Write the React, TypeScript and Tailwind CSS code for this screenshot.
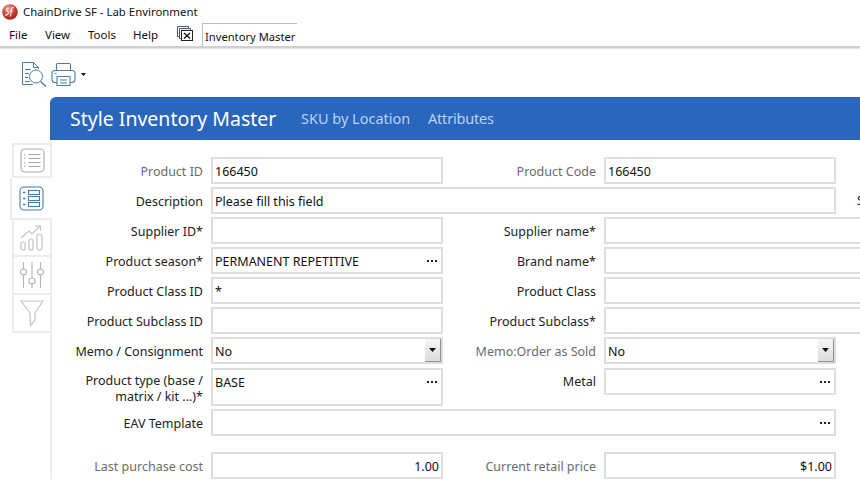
import React from 'react'

type FieldProps = {
  label: React.ReactNode
  value?: string
  kind?: 'text' | 'lookup' | 'select'
  align?: 'left' | 'right'
  muted?: boolean
  inputClass?: string
  labelClass?: string
}

function Field({
  label,
  value,
  kind = 'text',
  align = 'left',
  muted,
  inputClass = 'w-[232px] h-[27px]',
  labelClass = 'self-center pt-[2px]',
}: FieldProps) {
  return (
    <>
      <div
        className={`w-[161px] shrink-0 pr-[8px] text-right leading-[16px] ${labelClass} ${
          muted ? 'text-[#6b6b6b]' : 'text-[#222]'
        }`}
      >
        {label}
      </div>
      <div className={`shrink-0 border-2 border-[#dedede] bg-white flex items-start relative ${inputClass}`}>
        <span
          className={`flex-1 pl-[2px] pr-[2px] pt-[5px] leading-[16px] text-[#111] whitespace-nowrap ${
            align === 'right' ? 'text-right' : ''
          }`}
        >
          {value}
        </span>
        {kind === 'lookup' && (
          <span className="absolute right-[4px] top-[11px] flex gap-[2px]">
            <i className="w-[2px] h-[2px] bg-[#222]" />
            <i className="w-[2px] h-[2px] bg-[#222]" />
            <i className="w-[2px] h-[2px] bg-[#222]" />
          </span>
        )}
        {kind === 'select' && (
          <span className="absolute right-0 top-0 w-[16px] h-[23px] bg-gradient-to-b from-[#f6f6f6] to-[#dcdcdc] border-r border-b border-[#8f8f8f] flex items-center justify-center">
            <svg width="8" height="4" viewBox="0 0 8 4">
              <path d="M0 0h7L3.5 4z" fill="#111" />
            </svg>
          </span>
        )}
      </div>
    </>
  )
}

function SideTab({ children, className }: { children: React.ReactNode; className: string }) {
  return <div className={`flex items-center justify-center border-l-2 border-b-2 border-[#ececec] bg-white ${className}`}>{children}</div>
}

const wide = 'w-[300px] h-[27px]'

export default function App() {
  return (
    <div
      className="w-[860px] h-[481px] overflow-hidden bg-white text-[12.5px] text-[#222]"
      style={{ fontFamily: '"Noto Sans", "Open Sans", sans-serif' }}
    >
      {/* title bar */}
      <div className="h-[23px] flex items-center pl-[2px] pt-[1px] gap-[5px] text-[11.4px] text-[#111]">
        <svg width="16" height="16" viewBox="0 0 16 16">
          <defs>
            <radialGradient id="logo" cx="40%" cy="30%" r="75%">
              <stop offset="0%" stopColor="#f0a898" />
              <stop offset="55%" stopColor="#cf3f36" />
              <stop offset="100%" stopColor="#8a2420" />
            </radialGradient>
          </defs>
          <circle cx="8" cy="8" r="7.8" fill="url(#logo)" />
          <path d="M7 4.5C5 3.5 3.5 5 5 6.5s2 3 .5 4-2.5.3-2.5.3M12 3.5c-2-.5-2.5 1-2.8 3L8.5 12.5M7.5 7h3.5" stroke="#fbeee9" strokeWidth="1.2" fill="none" />
        </svg>
        <span>ChainDrive SF - Lab Environment</span>
      </div>

      {/* menu bar */}
      <div className="h-[25px] flex items-end border-b-2 border-[#d0d0d0] shadow-[0_1px_1px_#e5e5e5] pl-[9px] text-[11.5px] text-[#111]">
        <div className="flex items-center h-[23px]">
          <span className="w-[36px]">File</span>
          <span className="w-[43px]">View</span>
          <span className="w-[45px]">Tools</span>
          <span className="w-[44px]">Help</span>
          <svg width="18" height="17" viewBox="0 0 18 17" fill="none" stroke="#4a5a6a" className="-mt-[3px] -ml-[1px]">
            <path d="M1.5 1.5h11v2M3.5 3.5h11v2" />
            <path d="M1.5 1.5v10h2M3.5 3.5v10h2" />
            <rect x="5.5" y="5.5" width="11" height="10" stroke="#222" />
            <path d="M8 8l6 5.5M14 8l-6 5.5" stroke="#111" strokeWidth="1.3" />
          </svg>
        </div>
        <div className="ml-[8px] w-[95px] h-[23px] border-l border-t border-[#bdbdbd] pl-[2px] pt-[4px] leading-[17px] text-[11.2px] whitespace-nowrap">
          Inventory Master
        </div>
      </div>

      {/* toolbar */}
      <div className="h-[49px] flex items-center pl-[21px] pt-[3px] gap-[4px]">
        <svg width="26" height="26" viewBox="0 0 26 26" fill="none" stroke="#4c7fa8" strokeWidth="1">
          <path d="M12 23.5H1.5V1.5h11l5 5V8" />
          <path d="M12.5 1.5v5h5" />
          <path d="M4 8.500h6M4 12.500h4M4 16.500h3M4 20.500h5" />
          <circle cx="15" cy="15.500" r="6.500" />
          <path d="M19.500 20.500l5.500 5" stroke="#5a6b78" strokeWidth="1.2" />
        </svg>
        <svg width="25" height="25" viewBox="0 0 25 25" fill="none" stroke="#4c7fa8" strokeWidth="1.1">
          <path d="M5.500 9V2.500a1 1 0 0 1 1-1h12a1 1 0 0 1 1 1V9" />
          <rect x="1" y="8.500" width="23" height="12" rx="3" />
          <path d="M6 14.500h13v9H6z" fill="#fff" />
          <path d="M9 18h7M9 21h7" />
          <path d="M3.500 11.500h2" />
        </svg>
        <svg width="5" height="3" viewBox="0 0 5 3" className="ml-[1px] mt-[1px]">
          <path d="M0 0h5L2.500 3z" fill="#111" />
        </svg>
      </div>

      <div className="flex">
        {/* side tabs */}
        <div className="w-[50px] shrink-0 flex flex-col items-end pt-[46px]">
          <SideTab className="w-[38px] h-[35px] border-t-2">
            <svg width="25" height="25" viewBox="0 0 25 25" fill="none" stroke="#a9a9a9" strokeWidth="1.1">
              <rect x="1" y="1" width="23" height="23" rx="4" />
              <path d="M8.500 6.500h12M8.500 10.500h12M8.500 14.500h12M8.500 18.500h12" />
              <path d="M4.500 6v14" strokeDasharray="1 3" />
            </svg>
          </SideTab>
          <SideTab className="w-[42px] h-[42px] -mr-[2px] relative z-10 pr-[2px]">
            <svg width="25" height="25" viewBox="0 0 25 25" fill="none" stroke="#4d7ba0" strokeWidth="1.1">
              <rect x="1" y="1" width="23" height="23" rx="4" />
              <rect x="9.500" y="4.500" width="11" height="4" />
              <rect x="9.500" y="10.500" width="11" height="4" />
              <rect x="9.500" y="16.500" width="11" height="4" />
              <path d="M4 6.500h2.500M4 12.500h2.500M4 18.500h2.500" strokeWidth="1.5" />
            </svg>
          </SideTab>
          <SideTab className="w-[38px] h-[37px]">
            <svg width="24" height="26" viewBox="0 0 24 26" fill="none" stroke="#c4c4c4" strokeWidth="1.2">
              <rect x="1" y="17" width="4" height="8" rx="2" />
              <rect x="9" y="14" width="4" height="11" rx="2" />
              <rect x="17" y="9" width="5" height="16" rx="2.500" />
              <path d="M1 13l8-7 3 3 8-8M15 1h5.500v5" />
            </svg>
          </SideTab>
          <SideTab className="w-[38px] h-[38px]">
            <svg width="24" height="28" viewBox="0 0 24 28" fill="none" stroke="#b5b5b5" strokeWidth="1.1">
              <path d="M3.500 1v7M3.500 14v13M12 1v16M12 23v4M20.500 1v7M20.500 14v13" />
              <circle cx="3.500" cy="11" r="3" />
              <circle cx="12" cy="20" r="3" />
              <circle cx="20.500" cy="11" r="3" />
            </svg>
          </SideTab>
          <SideTab className="w-[38px] h-[38px]">
            <svg width="24" height="28" viewBox="0 0 24 28" fill="none" stroke="#c4c4c4" strokeWidth="1.2">
              <path d="M1 2h22L15 14v7l-4.500 5.500L10 14z" />
            </svg>
          </SideTab>
        </div>

        {/* main panel */}
        <div className="w-[810px] shrink-0 border-l-2 border-[#ececec]">
          <div className="-ml-[2px] h-[43px] bg-[#2a66bd] rounded-tl-[6px] flex items-center pl-[20px] pt-[1px] text-white">
            <span className="text-[19.5px] leading-[26px] w-[231px] whitespace-nowrap">Style Inventory Master</span>
            <span className="text-[14.5px] text-[#bcd1ee] w-[127px] whitespace-nowrap">SKU by Location</span>
            <span className="text-[14.5px] tracking-[-0.2px] text-[#bcd1ee]">Attributes</span>
          </div>

          <div className="-ml-[2px] pt-[17px] flex flex-col gap-[3px]">
            <div className="flex">
              <Field label="Product ID" value="166450" muted />
              <Field label="Product Code" value="166450" muted />
            </div>
            <div className="flex">
              <Field label="Description" value="Please fill this field" inputClass="w-[625px] h-[27px]" />
              <span className="ml-[21px] self-center pt-[2px]">S</span>
            </div>
            <div className="flex">
              <Field label="Supplier ID*" />
              <Field label="Supplier name*" inputClass={wide} />
            </div>
            <div className="flex">
              <Field label="Product season*" value="PERMANENT REPETITIVE" kind="lookup" />
              <Field label="Brand name*" inputClass={wide} />
            </div>
            <div className="flex">
              <Field label="Product Class ID" value="*" />
              <Field label="Product Class" inputClass={wide} />
            </div>
            <div className="flex">
              <Field label="Product Subclass ID" />
              <Field label="Product Subclass*" inputClass={wide} />
            </div>
            <div className="flex">
              <Field label="Memo / Consignment" value="No" kind="select" />
              <Field label="Memo:Order as Sold" value="No" kind="select" muted />
            </div>
            <div className="flex items-start mt-[1px]">
              <Field
                label={
                  <>
                    Product type (base /<br />
                    matrix / kit ...)*
                  </>
                }
                labelClass="self-center pt-[3px]"
                value="BASE"
                kind="lookup"
                inputClass="w-[232px] h-[38px]"
              />
              <Field label="Metal" kind="lookup" labelClass="self-start pt-[6px]" />
            </div>
            <div className="flex">
              <Field label="EAV Template" kind="lookup" inputClass="w-[625px] h-[27px]" />
            </div>
            <div className="flex mt-[13px]">
              <Field label="Last purchase cost" value="1.00" align="right" muted />
              <Field label="Current retail price" value="$1.00" align="right" muted />
            </div>
          </div>
        </div>
      </div>
    </div>
  )
}
